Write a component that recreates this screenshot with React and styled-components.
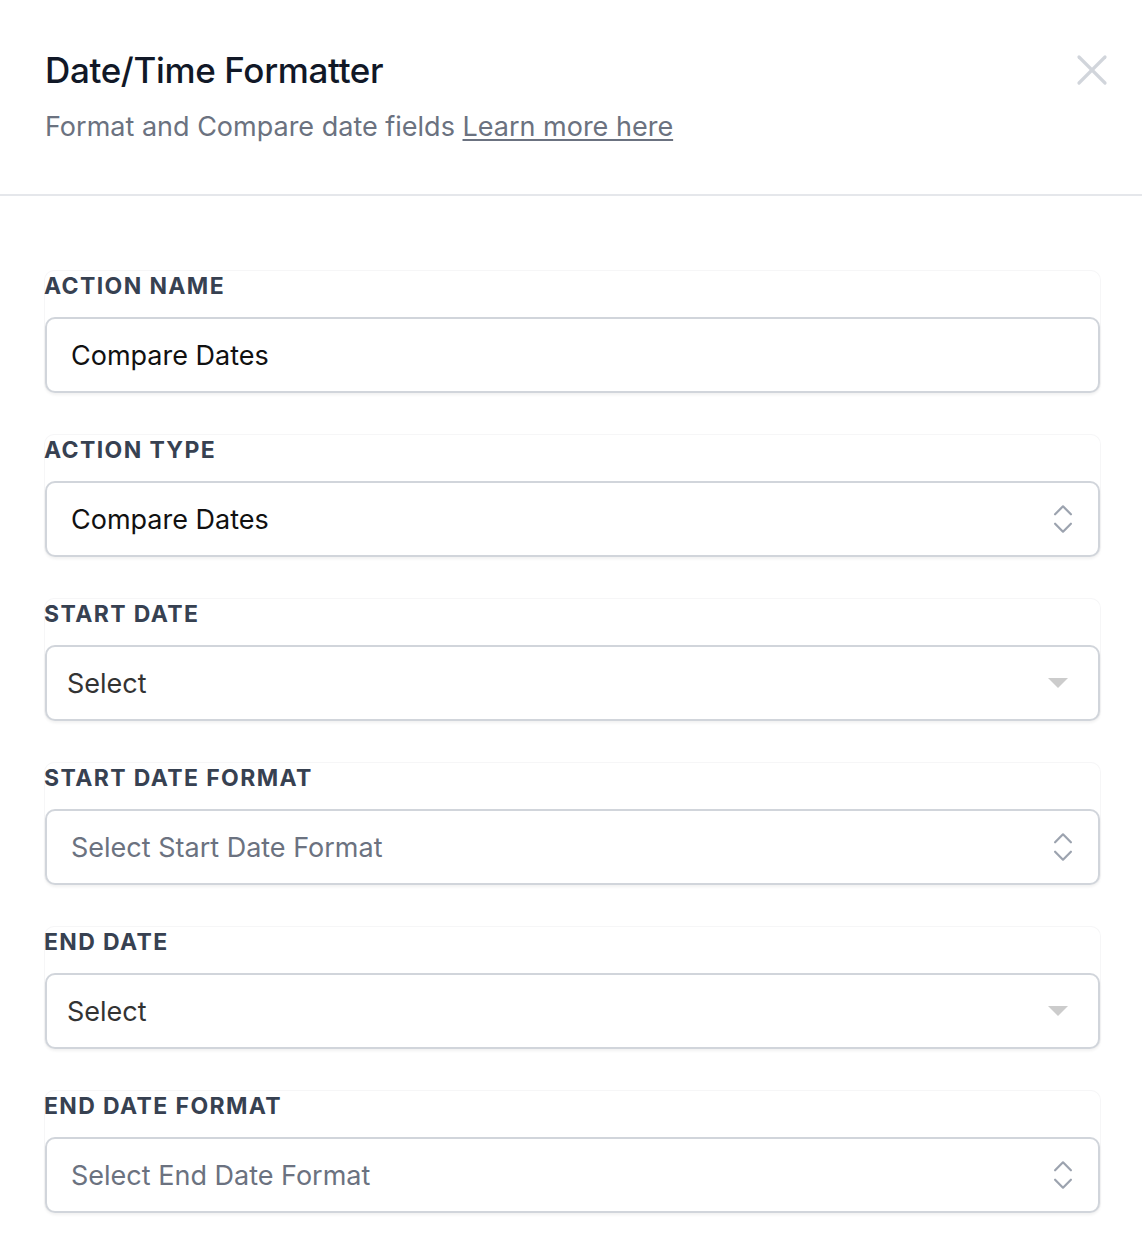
import React from "react";
import styled, { createGlobalStyle } from "styled-components";
import { ChevronsUpDown, X } from "lucide-react";

const GlobalStyle = createGlobalStyle`
  body {
    margin: 0;
    background: #fff;
    font-family: Inter, "Noto Sans", sans-serif;
    -webkit-font-smoothing: antialiased;
  }
`;

const Panel = styled.div`
  width: 1142px;
  background: #fff;
`;

const Header = styled.header`
  display: flex;
  justify-content: space-between;
  align-items: flex-start;
  padding: 48px 24px 48px 45px;
  border-bottom: 2px solid #e5e7eb;
`;

const Title = styled.h2`
  margin: 0;
  font-size: 35px;
  line-height: 44px;
  font-weight: 500;
  color: #111827;
  letter-spacing: -0.01em;
`;

const Subtitle = styled.p`
  margin: 16px 0 0;
  font-size: 27px;
  line-height: 38px;
  color: #6b7280;

  a {
    color: inherit;
    text-decoration: underline;
    text-underline-offset: 3px;
  }
`;

const CloseButton = styled.button`
  border: 0;
  background: none;
  padding: 0;
  margin-top: -4px;
  color: #d1d5db;
  display: flex;
  cursor: pointer;
`;

const Form = styled.div`
  display: flex;
  flex-direction: column;
  gap: 41px;
  padding: 74px 41px 30px 44px;
`;

const Group = styled.div`
  border: 1px solid #f6f6f7;
  border-bottom: 0;
  border-radius: 10px;
`;

const Label = styled.label`
  display: block;
  margin-left: -1px;
  padding-bottom: 16px;
  font-size: 23px;
  line-height: 30px;
  font-weight: 700;
  letter-spacing: 0.06em;
  text-transform: uppercase;
  color: #374151;
`;

const Field = styled.div`
  display: flex;
  align-items: center;
  height: 76px;
  box-sizing: border-box;
  padding: 0 24px 0 ${(p) => (p.$plain ? 20 : 24)}px;
  border: 2px solid #d1d5db;
  border-radius: 10px;
  background: #fff;
  box-shadow: 0 2px 3px rgba(0, 0, 0, 0.06);
  font-size: 27px;
  color: ${(p) => (p.$muted ? "#6b7280" : p.$plain ? "#333" : "#111")};
`;

const Value = styled.span`
  flex: 1;
`;

const Caret = styled.span`
  width: 0;
  height: 0;
  margin-right: 6px;
  border-left: 10px solid transparent;
  border-right: 10px solid transparent;
  border-top: 10px solid #cccccc;
`;

const Stepper = styled(ChevronsUpDown)`
  color: #9ca3af;
  margin-right: -8px;
`;

const fields = [
  { label: "Action Name", value: "Compare Dates", kind: "input" },
  { label: "Action Type", value: "Compare Dates", kind: "native" },
  { label: "Start Date", value: "Select", kind: "select" },
  { label: "Start Date Format", value: "Select Start Date Format", kind: "native", muted: true },
  { label: "End Date", value: "Select", kind: "select" },
  { label: "End Date Format", value: "Select End Date Format", kind: "native", muted: true },
];

const App = () => {
  return (
    <>
      <GlobalStyle />
      <Panel>
        <Header>
          <div>
            <Title>Date/Time Formatter</Title>
            <Subtitle>
              Format and Compare date fields <a href="#docs">Learn more here</a>
            </Subtitle>
          </div>
          <CloseButton aria-label="Close">
            <X size={52} strokeWidth={1.5} />
          </CloseButton>
        </Header>
        <Form>
          {fields.map((f) => (
            <Group key={f.label}>
              <Label>{f.label}</Label>
              <Field $plain={f.kind === "select"} $muted={f.muted}>
                <Value>{f.value}</Value>
                {f.kind === "native" && <Stepper size={38} strokeWidth={1.4} />}
                {f.kind === "select" && <Caret />}
              </Field>
            </Group>
          ))}
        </Form>
      </Panel>
    </>
  );
};

export default App;
